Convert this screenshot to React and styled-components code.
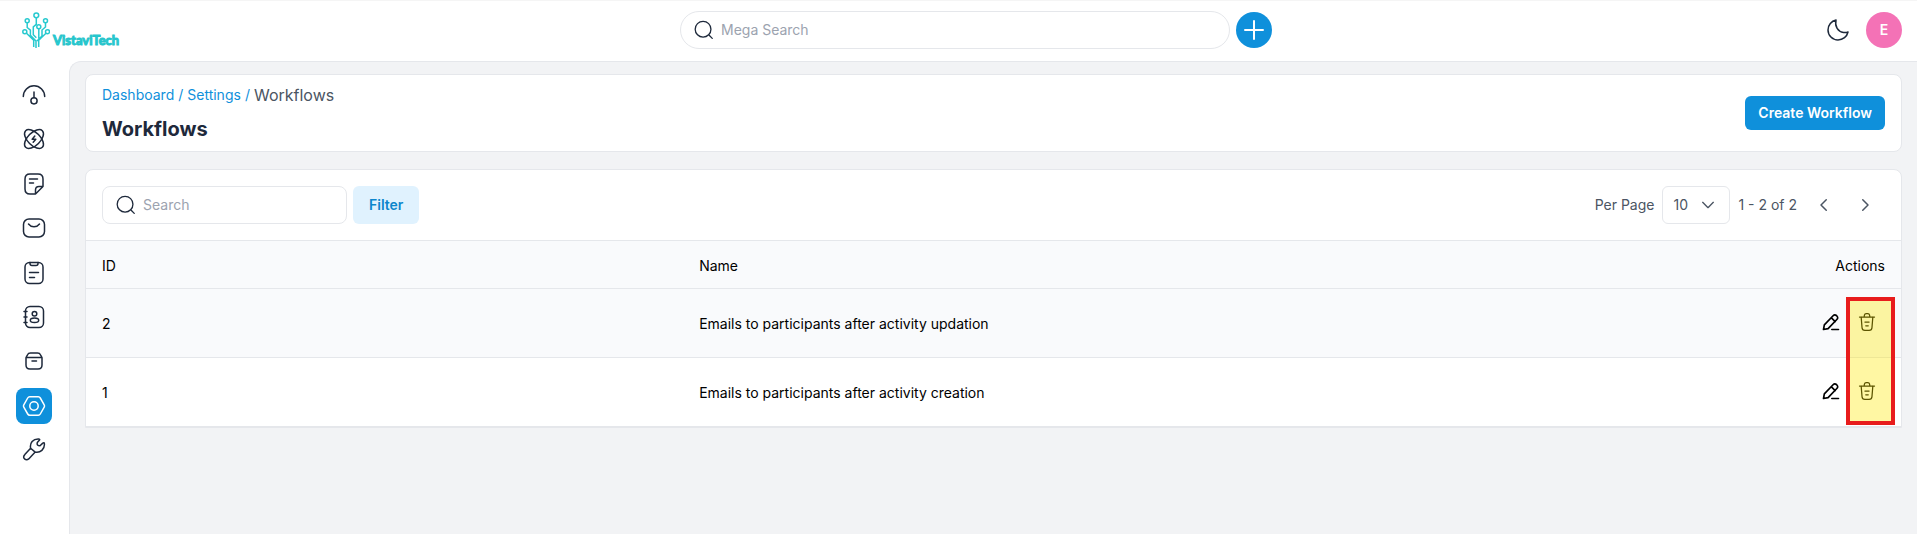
import React from "react";
import styled, { createGlobalStyle } from "styled-components";

const GlobalStyle = createGlobalStyle`
  *, *::before, *::after { box-sizing: border-box; }
  body {
    margin: 0;
    background: #ffffff;
    color: #000000;
    font-family: Inter, "Liberation Sans", sans-serif;
    font-size: 14px;
    line-height: 20px;
  }
  button, input, select { font: inherit; color: inherit; }
`;

const blue = "#0f90db";
const line = "#e5e7eb";
const ink = "#1e293b";
const slate = "#4b5563";

const Page = styled.div`
  display: flex;
  flex-direction: column;
  min-height: 100vh;
`;

const Header = styled.header`
  display: flex;
  align-items: center;
  height: 61px;
  padding: 0 15px 2px 22px;
  border-top: 1px solid #f5f5f5;
`;

const Brand = styled.div`
  display: flex;
  flex: 1 1 28px;
`;

const Logo = styled.a`
  display: flex;
  align-items: flex-end;
  gap: 3px;
  color: #1fd3d8;
  font-family: Lato, sans-serif;
  font-size: 13px;
  font-weight: 700;
  line-height: 14px;
  text-decoration: none;
  -webkit-text-stroke: 1px #27c3ca;
`;

const LogoText = styled.span`
  padding-bottom: 2px;
`;

const MegaBar = styled.div`
  display: flex;
  align-items: center;
  flex: 0 1 592px;
  gap: 6px;
`;

const SearchBox = styled.label`
  display: flex;
  align-items: center;
  flex: ${(p) => (p.$pill ? "1" : "none")};
  gap: 7px;
  width: 245px;
  height: 38px;
  padding: 0 12px;
  border: 1px solid ${line};
  border-radius: ${(p) => (p.$pill ? "19px" : "8px")};
  background: #ffffff;
  color: ${ink};
`;

const SearchInput = styled.input`
  flex: 1;
  min-width: 0;
  padding: 0;
  border: 0;
  outline: 0;
  background: transparent;
  &::placeholder { color: #9ca3af; opacity: 1; }
`;

const RoundButton = styled.button`
  display: grid;
  place-items: center;
  flex: none;
  width: 36px;
  height: 36px;
  padding: 0;
  border: 0;
  border-radius: 50%;
  background: ${(p) => p.$bg};
  color: #ffffff;
  font-weight: 600;
`;

const Account = styled.div`
  display: flex;
  flex: 1 1 0;
  justify-content: flex-end;
  align-items: center;
  gap: 16px;
`;

const PlainButton = styled.button`
  display: grid;
  place-items: center;
  width: ${(p) => p.$size}px;
  height: ${(p) => p.$size}px;
  padding: 0;
  border: 0;
  background: transparent;
  color: ${(p) => p.$color};
`;

const Body = styled.div`
  display: flex;
  flex: 1;
`;

const Sidebar = styled.nav`
  display: flex;
  flex-direction: column;
  justify-content: space-between;
  flex: none;
  width: 69px;
  height: 423px;
  padding: 16px;
`;

const NavLink = styled.a`
  display: grid;
  place-items: center;
  width: 36px;
  height: 36px;
  border-radius: 8px;
  background: ${(p) => (p.$active ? blue : "transparent")};
  color: ${(p) => (p.$active ? "#ffffff" : ink)};
`;

const Main = styled.main`
  flex: 1;
  min-width: 0;
  padding: 12px 15px 16px;
  border: solid ${line};
  border-width: 1px 0 0 1px;
  border-top-left-radius: 12px;
  background: #f2f3f5;
`;

const TitleCard = styled.section`
  display: flex;
  align-items: center;
  justify-content: space-between;
  min-height: 78px;
  padding: 0 16px;
  border: 1px solid ${line};
  border-radius: 8px;
  background: #ffffff;
`;

const Heading = styled.div`
  padding-top: 4px;
`;

const Crumbs = styled.nav`
  display: flex;
  gap: 4px;
  color: ${blue};
  line-height: 24px;
  a { color: inherit; text-decoration: none; }
`;

const Current = styled.span`
  color: ${slate};
  font-size: 16px;
`;

const Title = styled.h1`
  margin: 4px 0 0;
  color: ${ink};
  font-size: 20px;
  line-height: 36px;
  font-weight: 700;
`;

const Button = styled.button`
  height: ${(p) => (p.$soft ? 38 : 34)}px;
  padding: 0 ${(p) => (p.$soft ? 16 : 13)}px;
  border: 0;
  border-radius: 6px;
  background: ${(p) => (p.$soft ? "#e0f2fe" : blue)};
  color: ${(p) => (p.$soft ? "#0c86cc" : "#ffffff")};
  font-weight: 600;
`;

const TableCard = styled.section`
  margin-top: 17px;
  border: 1px solid ${line};
  border-radius: 8px 8px 0 0;
  background: #ffffff;
`;

const Toolbar = styled.div`
  display: flex;
  align-items: center;
  justify-content: space-between;
  padding: 16px;
`;

const Group = styled.div`
  display: flex;
  align-items: center;
  gap: ${(p) => p.$gap}px;
  color: ${slate};
`;

const SelectWrap = styled.span`
  display: grid;
  align-items: center;
  width: 68px;
  > * { grid-area: 1 / 1; }
  > svg { justify-self: end; margin-right: 14px; pointer-events: none; }
`;

const Select = styled.select`
  appearance: none;
  width: 100%;
  height: 38px;
  padding: 0 10px;
  border: 1px solid ${line};
  border-radius: 6px;
  background: #ffffff;
`;

const Pager = styled.div`
  display: flex;
  gap: 17px;
  padding: 0 8px 0 7px;
`;

const TableWrap = styled.div`
  position: relative;
`;

const Table = styled.table`
  width: 100%;
  table-layout: fixed;
  border-collapse: separate;
  border-spacing: 0;
`;

const Cell = styled.td`
  width: ${(p) => p.$width || "auto"};
  height: 69px;
  padding: 2px 16px 0;
  border-bottom: 1px solid ${line};
  text-align: left;
  font-weight: 400;
`;

const HeadCell = styled(Cell)`
  height: 49px;
  border-top: 1px solid ${line};
  text-align: ${(p) => p.$align || "left"};
`;

const Row = styled.tr`
  background: ${(p) => (p.$tint ? "#f9fafc" : "#ffffff")};
`;

const Actions = styled.div`
  display: flex;
  justify-content: flex-end;
  gap: 16px;
  padding: 0 8px 4px 0;
`;

const Highlight = styled.div`
  position: absolute;
  top: 57px;
  right: 6px;
  bottom: 2px;
  width: 49px;
  border: 4px solid #e81c1c;
  background: rgba(255, 233, 0, 0.36);
  pointer-events: none;
`;

function Icon({ size = 24, weight = 1.5, children }) {
  return (
    <svg width={size} height={size} viewBox="0 0 24 24" fill="none" stroke="currentColor"
      strokeWidth={weight} strokeLinecap="round" strokeLinejoin="round" aria-hidden="true">
      {children}
    </svg>
  );
}

const SearchIcon = () => (
  <Icon size={21}>
    <circle cx="11.5" cy="10.5" r="9" />
    <path d="M18.5 17.5 L22 21" />
  </Icon>
);

const navItems = [
  ["Dashboard", <><path d="M1.3 13.500A10.7 10.7 0 0 1 22.7 13.500M12 9v5.6" /><circle cx="12" cy="17.800" r="3.1" /></>],
  ["Activity", <><ellipse cx="12" cy="12" rx="11.8" ry="6.3" transform="rotate(45 12 12)" /><ellipse cx="12" cy="12" rx="11.8" ry="6.3" transform="rotate(-45 12 12)" /><path d="M12.8 9L10.2 12.3h3.6L11.200 15.200" /></>],
  ["Notes", <><path d="M21 14V7q0-5-5-5H8Q3 2 3 7v10q0 5 5 5h5.500L21 14.500M13.500 22v-4q0-3.500 3.500-3.500h4M7.500 7h8M7.500 11h4" /></>],
  ["Mail", <><rect x="1.500" y="3" width="21" height="18" rx="5.500" /><path d="M6.500 8c3 3.800 8 3.800 11 0" /></>],
  ["Tasks", <><rect x="3" y="1.500" width="18" height="21" rx="4.500" /><path d="M8 1.500v1q0 2 2 2h4q2 0 2-2v-1M7.500 11.500h9M7.500 16.500h5" /></>],
  ["Contacts", <><rect x="3.500" y="1.500" width="18" height="21" rx="4.500" /><path d="M2 6.500h3M2 12h3M2 17.500h3" /><circle cx="12.500" cy="8.700" r="2.300" /><ellipse cx="12.500" cy="15.300" rx="4.200" ry="2.300" /></>],
  ["Products", <><path d="M4 8.500v7.500q0 4 4 4h8q4 0 4-4V8.500M4.500 8.500h15M4 8.500L5.500 5.800Q6.300 4 8.500 4h7q2.200 0 3 1.800L20 8.500M10 12h4.500" /></>],
  ["Settings", <><path d="M1.800 13.200q-.7-1.200 0-2.400L5.700 4q.7-1.200 2-1.200h8.600q1.300 0 2 1.200l3.900 6.800q.7 1.200 0 2.400L18.300 20q-.7 1.200-2 1.200H7.700q-1.300 0-2-1.200z" /><circle cx="12" cy="12" r="4.200" /></>],
  ["Tools", <><path d="M8.600 10.200C7.600 5 11 .8 16.500 1q1.800.2.800 1.300l-2 2.300q-.8 3.200 2.700 3.200l2.800-2.700q1.400-1 1.600.7c.4 5.500-4 9.300-9.200 8.300M8.600 10.200l4.600 3.900-6.500 6.800q-2 1.700-4.200 0-1.800-2.200.3-4.300z" /></>],
];

const rows = [
  { id: 2, name: "Emails to participants after activity updation" },
  { id: 1, name: "Emails to participants after activity creation" },
];

function LogoMark() {
  return (
    <svg width="28" height="37" viewBox="0 0 28 37" fill="none" stroke="#27c9cf" strokeWidth="1.500" aria-hidden="true">
      <circle cx="14.300" cy="3.300" r="2.400" />
      <circle cx="5.200" cy="8.800" r="2" />
      <circle cx="23.500" cy="8.800" r="2" />
      <circle cx="16.800" cy="14.800" r="2" />
      <circle cx="2.800" cy="19.700" r="2" />
      <circle cx="25.500" cy="19.700" r="2" />
      <path d="M14.300 5.800v6.500l-3 2.500v8l3 3M5.200 11v4.500l3.200 2.700v5L14 29v7M4.500 21.200l7.200 7V35M23.500 11v4l-3.500 3v6l-5 5M16.800 17v9.500M24 21.200l-7.300 7V35" />
    </svg>
  );
}

export default function App() {
  return (
    <Page>
      <GlobalStyle />
      <Header>
        <Brand>
          <Logo href="#"><LogoMark /><LogoText>VistaviTech</LogoText></Logo>
        </Brand>
        <MegaBar>
          <SearchBox $pill>
            <SearchIcon />
            <SearchInput aria-label="Mega Search" placeholder="Mega Search" />
          </SearchBox>
          <RoundButton $bg={blue} aria-label="Add">
            <Icon weight={2}><path d="M12 3v18M3 12h18" /></Icon>
          </RoundButton>
        </MegaBar>
        <Account>
          <PlainButton $size={24} $color={ink} aria-label="Dark mode">
            <Icon><path d="M10 2C5.500 3 2 7 2 12a10 10 0 0 0 10 10c5 0 9-3.500 10-8-1.500.6-3 .7-4.500.4C12 13.500 8.500 8.500 10 2z" /></Icon>
          </PlainButton>
          <RoundButton $bg="#f472b6" aria-label="Account">E</RoundButton>
        </Account>
      </Header>
      <Body>
        <Sidebar>
          {navItems.map(([label, shape]) => (
            <NavLink key={label} href="#" aria-label={label} $active={label === "Settings"}>
              <Icon>{shape}</Icon>
            </NavLink>
          ))}
        </Sidebar>
        <Main>
          <TitleCard>
            <Heading>
              <Crumbs aria-label="Breadcrumb">
                <a href="#">Dashboard</a><span>/</span><a href="#">Settings</a><span>/</span>
                <Current>Workflows</Current>
              </Crumbs>
              <Title>Workflows</Title>
            </Heading>
            <Button>Create Workflow</Button>
          </TitleCard>
          <TableCard>
            <Toolbar>
              <Group $gap={6}>
                <SearchBox>
                  <SearchIcon />
                  <SearchInput aria-label="Search" placeholder="Search" />
                </SearchBox>
                <Button $soft>Filter</Button>
              </Group>
              <Group $gap={8}>
                <label htmlFor="per-page">Per Page</label>
                <SelectWrap>
                  <Select id="per-page" defaultValue="10">
                    <option>10</option>
                    <option>25</option>
                  </Select>
                  <Icon size={16} weight={2}><path d="M4 8l8 8 8-8" /></Icon>
                </SelectWrap>
                <span>1 - 2 of 2</span>
                <Pager>
                  <PlainButton $size={24} $color={slate} aria-label="Previous page">
                    <Icon size={18} weight={2}><path d="M15 5l-7 7 7 7" /></Icon>
                  </PlainButton>
                  <PlainButton $size={24} $color={slate} aria-label="Next page">
                    <Icon size={18} weight={2}><path d="M9 5l7 7-7 7" /></Icon>
                  </PlainButton>
                </Pager>
              </Group>
            </Toolbar>
            <TableWrap>
              <Table>
                <thead>
                  <Row $tint>
                    <HeadCell as="th" $width="32.9%">ID</HeadCell>
                    <HeadCell as="th">Name</HeadCell>
                    <HeadCell as="th" $align="right">Actions</HeadCell>
                  </Row>
                </thead>
                <tbody>
                  {rows.map((row, i) => (
                    <Row key={row.id} $tint={i === 0}>
                      <Cell>{row.id}</Cell>
                      <Cell>{row.name}</Cell>
                      <Cell>
                        <Actions>
                          <PlainButton $size={20} $color="#000000" aria-label="Edit">
                            <Icon size={20} weight={2}><path d="M3 21l1-5.500L14.500 4.500q2-2 4.300 0 2.400 2.400.2 4.500L8.500 20zM12.500 7l4.500 4.500M13 21h8" /></Icon>
                          </PlainButton>
                          <PlainButton $size={20} $color="#000000" aria-label="Delete">
                            <Icon size={20}><path d="M3 6h18M5 6l1 12.500Q6.200 22 9.500 22h5q3.300 0 3.500-3.500L19 6M8.500 6l.5-2.500Q9.300 2 11 2h2q1.700 0 2 1.500l.5 2.500M9.500 12h5M10.500 16.500h3" /></Icon>
                          </PlainButton>
                        </Actions>
                      </Cell>
                    </Row>
                  ))}
                </tbody>
              </Table>
              <Highlight />
            </TableWrap>
          </TableCard>
        </Main>
      </Body>
    </Page>
  );
}
